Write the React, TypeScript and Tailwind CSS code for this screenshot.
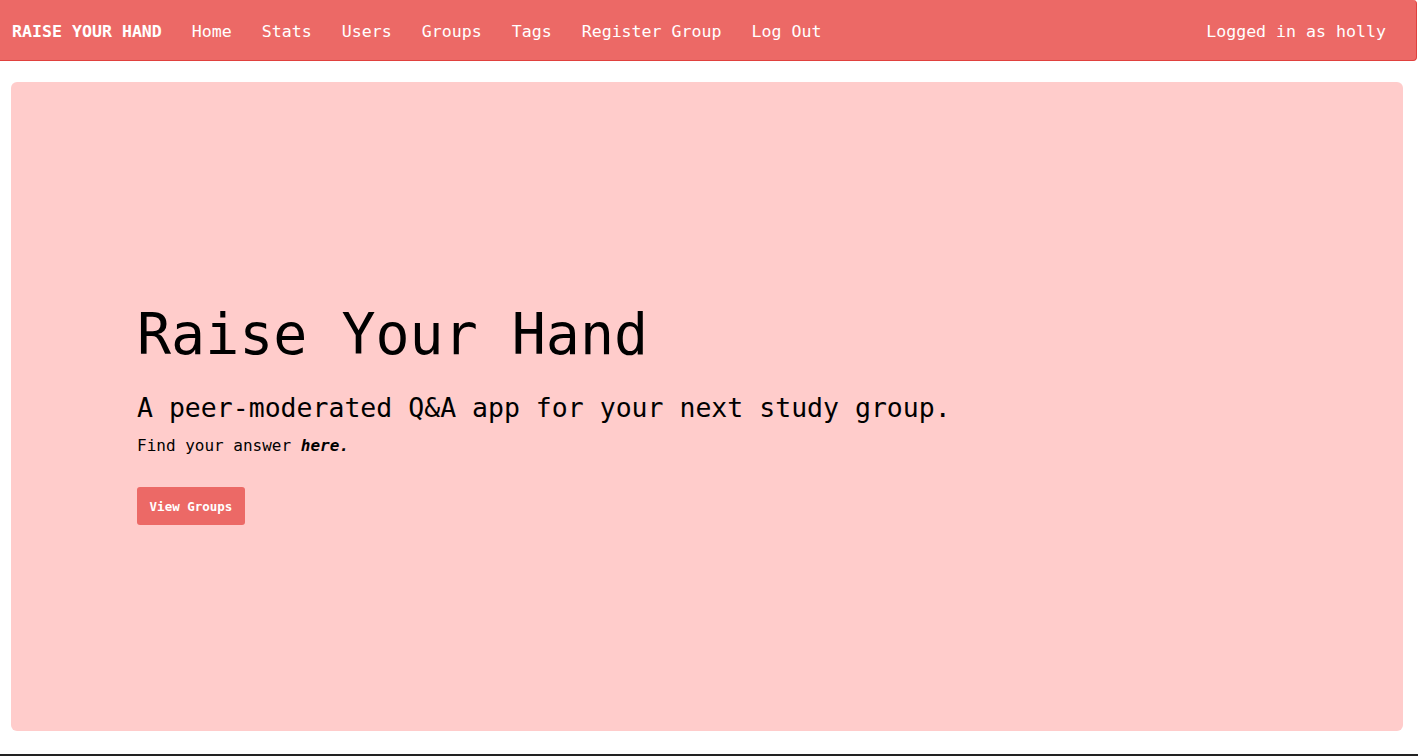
import React from "react";

const mono = { fontFamily: '"DejaVu Sans Mono", "Liberation Mono", monospace' };

export default function App() {
  const links = ["Home", "Stats", "Users", "Groups", "Tags", "Register Group", "Log Out"];
  return (
    <div className="relative flex h-[756px] w-full flex-col overflow-hidden bg-white" style={mono}>
      <nav className="flex h-[61px] w-[1417px] items-start justify-between rounded-tr-[4px] rounded-br-[4px] border-b border-r border-[#e0413e] bg-[#ec6966] pt-[23px] text-[16.6px] leading-[17px] text-white">
        <div className="flex items-start gap-[30px] pl-[12px]">
          <span className="font-bold">RAISE YOUR HAND</span>
          {links.map((l) => (
            <span key={l} className="whitespace-pre">{l}</span>
          ))}
        </div>
        <span className="pr-[30px]">Logged in as holly</span>
      </nav>
      <main className="ml-[11px] mt-[21px] h-[649px] w-[1392px] rounded-[6px] bg-[#ffcccb] pl-[126px] pt-[224px] text-black">
        <h1 className="text-[56.6px] leading-[57px]">Raise Your Hand</h1>
        <h2 className="mt-[32px] text-[26.5px] leading-[26px]">A peer-moderated Q&amp;A app for your next study group.</h2>
        <p className="mt-[16.5px] text-[16px] leading-[16px]">
          Find your answer <b className="italic">here.</b>
        </p>
        <button className="mt-[33.5px] flex h-[38px] w-[108px] items-center justify-center rounded-[3px] bg-[#ec6966] pt-[3px] text-[12.5px] font-bold text-white" style={mono}>
          View Groups
        </button>
      </main>
      <div className="absolute bottom-0 left-0 h-[2px] w-full bg-[#222]" />
    </div>
  );
}
